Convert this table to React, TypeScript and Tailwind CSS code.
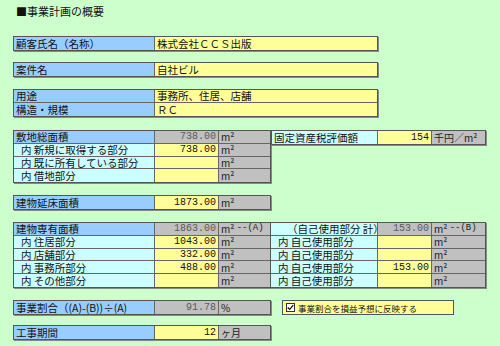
import React from "react";

const FONT = "font-['MS_PGothic','Noto_Sans_CJK_JP',sans-serif]";
const NUM = "font-['Liberation_Mono','Noto_Sans_CJK_JP',monospace]";

type CellKind = "label" | "sub" | "input" | "calc" | "unit";

const KIND: Record<CellKind, string> = {
  label: "bg-[#99ccff] text-[#111] pl-[2px]",
  sub: "bg-[#ccffff] text-[#111] pl-[7px]",
  input: "bg-[#ffff99] text-[#111] justify-end pr-[2px]",
  calc: "bg-[#c0c0c0] text-[#5a5a5a] justify-end pr-[2px]",
  unit: "bg-[#c0c0c0] text-[#222] pl-[2px] text-[10px]",
};

function Cell({
  kind,
  w,
  last,
  num,
  children,
}: {
  kind: CellKind;
  w: string;
  last?: boolean;
  num?: boolean;
  children?: React.ReactNode;
}) {
  return (
    <div
      className={`${w} ${KIND[kind]} ${last ? "" : "border-r border-[#666]"} ${
        num ? NUM + " text-[10px]" : ""
      } flex items-center whitespace-nowrap leading-[11px]`}>
      {children}
    </div>
  );
}

function Row({ children, last }: { children: React.ReactNode; last?: boolean }) {
  return (
    <div className={`flex h-[12.75px] ${last ? "" : "border-b border-[#666]"}`}>{children}</div>
  );
}

function Group({ children, className = "" }: { children: React.ReactNode; className?: string }) {
  return (
    <div className={`border border-[#555] shadow-[1px_1px_0_#888] ${className}`}>{children}</div>
  );
}

const leftRows = [
  { label: "敷地総面積", value: "738.00", kind: "calc" as CellKind },
  { label: "内 新規に取得する部分", value: "738.00", kind: "input" as CellKind, sub: true },
  { label: "内 既に所有している部分", value: "", kind: "input" as CellKind, sub: true },
  { label: "内 借地部分", value: "", kind: "input" as CellKind, sub: true },
];

const ownRows = [
  { label: "内 住居部分", value: "1043.00" },
  { label: "内 店舗部分", value: "332.00" },
  { label: "内 事務所部分", value: "488.00" },
  { label: "内 その他部分", value: "" },
];

const selfRows = ["", "", "153.00", ""];

export default function App() {
  return (
    <div className={`w-[500px] h-[346px] bg-[#ccffcc] ${FONT} text-[10.5px] text-[#111] overflow-hidden`}>
      <div className="pl-[16px] pt-[5px] h-[17px] leading-[12px] text-[11px]">■事業計画の概要</div>

      <div className="pl-[13px]">
        <Group className="w-[365px] mt-[19px]">
          <Row last>
            <Cell kind="label" w="w-[141px]">顧客氏名（名称）</Cell>
            <Cell kind="input" w="flex-1 !justify-start !pl-[2px]" last>
              株式会社ＣＣＳ出版
            </Cell>
          </Row>
        </Group>

        <Group className="w-[365px] mt-[11.25px]">
          <Row last>
            <Cell kind="label" w="w-[141px]">案件名</Cell>
            <Cell kind="input" w="flex-1 !justify-start !pl-[2px]" last>
              自社ビル
            </Cell>
          </Row>
        </Group>

        <Group className="w-[365px] mt-[12.25px]">
          <Row>
            <Cell kind="label" w="w-[141px]">用途</Cell>
            <Cell kind="input" w="flex-1 !justify-start !pl-[2px]" last>
              事務所、住居、店舗
            </Cell>
          </Row>
          <Row last>
            <Cell kind="label" w="w-[141px]">構造・規模</Cell>
            <Cell kind="input" w="flex-1 !justify-start !pl-[2px]" last>
              ＲＣ
            </Cell>
          </Row>
        </Group>

        <div className="flex items-start mt-[13.5px]">
          <Group className="w-[258px]">
            {leftRows.map((r, i) => (
              <Row key={r.label} last={i === leftRows.length - 1}>
                <Cell kind={r.sub ? "sub" : "label"} w="w-[141px]">{r.label}</Cell>
                <Cell kind={r.kind} w="w-[64px]" num>{r.value}</Cell>
                <Cell kind="unit" w="flex-1" last>m²</Cell>
              </Row>
            ))}
          </Group>
          <Group className="w-[215px]">
            <Row last>
              <Cell kind="sub" w="w-[106px] !pl-[2px]">固定資産税評価額</Cell>
              <Cell kind="input" w="w-[54px]" num>154</Cell>
              <Cell kind="unit" w="flex-1" last>千円／m²</Cell>
            </Row>
          </Group>
        </div>

        <Group className="w-[258px] mt-[12px]">
          <Row last>
            <Cell kind="label" w="w-[141px]">建物延床面積</Cell>
            <Cell kind="input" w="w-[64px]" num>1873.00</Cell>
            <Cell kind="unit" w="flex-1" last>m²</Cell>
          </Row>
        </Group>

        <div className="flex items-start mt-[12.25px]">
          <Group className="w-[258px]">
            <Row>
              <Cell kind="label" w="w-[141px]">建物専有面積</Cell>
              <Cell kind="calc" w="w-[64px]" num>1863.00</Cell>
              <Cell kind="unit" w="flex-1" last>
                m²&nbsp;<span className={`${NUM} text-[9px]`}>--(A)</span>
              </Cell>
            </Row>
            {ownRows.map((r, i) => (
              <Row key={r.label} last={i === ownRows.length - 1}>
                <Cell kind="sub" w="w-[141px]">{r.label}</Cell>
                <Cell kind="input" w="w-[64px]" num>{r.value}</Cell>
                <Cell kind="unit" w="flex-1" last>m²</Cell>
              </Row>
            ))}
          </Group>
          <Group className="w-[215px] border-l-0">
            <Row>
              <Cell kind="sub" w="w-[107px] !pl-[16px]">（自己使用部分 計）</Cell>
              <Cell kind="calc" w="w-[54px]" num>153.00</Cell>
              <Cell kind="unit" w="flex-1" last>
                m²&nbsp;<span className={`${NUM} text-[9px]`}>--(B)</span>
              </Cell>
            </Row>
            {selfRows.map((v, i) => (
              <Row key={i} last={i === selfRows.length - 1}>
                <Cell kind="sub" w="w-[107px]">内 自己使用部分</Cell>
                <Cell kind="input" w="w-[54px]" num>{v}</Cell>
                <Cell kind="unit" w="flex-1" last>m²</Cell>
              </Row>
            ))}
          </Group>
        </div>

        <div className="flex items-center mt-[12.25px]">
          <Group className="w-[258px]">
            <Row last>
              <Cell kind="label" w="w-[141px]">事業割合（(A)-(B))÷(A)</Cell>
              <Cell kind="calc" w="w-[64px]" num>91.78</Cell>
              <Cell kind="unit" w="flex-1" last>%</Cell>
            </Row>
          </Group>
          <div className="ml-[11px] w-[172px] h-[15px] border border-[#555] bg-[#ffff99] flex items-center pl-[3px] gap-[3px]">
            <div className="w-[9px] h-[9px] border border-[#333] bg-white flex items-center justify-center">
              <svg viewBox="0 0 9 9" className="w-[7px] h-[7px]">
                <path d="M1 4.5 L3.5 7 L8 1.5" fill="none" stroke="#111" strokeWidth="1.6" />
              </svg>
            </div>
            <span className="leading-[10px] text-[8.5px]">事業割合を損益予想に反映する</span>
          </div>
        </div>

        <Group className="w-[258px] mt-[10.25px]">
          <Row last>
            <Cell kind="label" w="w-[141px]">工事期間</Cell>
            <Cell kind="input" w="w-[64px]" num>12</Cell>
            <Cell kind="unit" w="flex-1" last>ヶ月</Cell>
          </Row>
        </Group>
      </div>
    </div>
  );
}
